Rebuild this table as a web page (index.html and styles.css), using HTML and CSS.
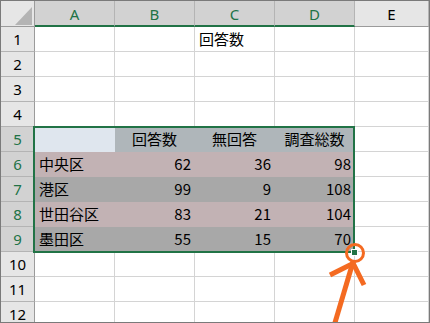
FILE: index.html
```html
<!DOCTYPE html>
<html>
	<head>
		<meta charset="UTF-8">
		<title>回答数</title>
		<link rel="stylesheet" href="styles.css">
	</head>
	<body>
		<div class="frame">
			<div class="sheet">
				<!-- 列見出し -->
				<div class="corner"><span class="tri"></span></div>
				<div class="colhead sel">A</div>
				<div class="colhead sel">B</div>
				<div class="colhead sel">C</div>
				<div class="colhead sel">D</div>
				<div class="colhead">E</div>
				<!-- 1 -->
				<div class="rowhead">1</div>
				<div class="cell"></div>
				<div class="cell"></div>
				<div class="cell">回答数</div>
				<div class="cell"></div>
				<div class="cell"></div>
				<!-- 2 -->
				<div class="rowhead">2</div>
				<div class="cell"></div>
				<div class="cell"></div>
				<div class="cell"></div>
				<div class="cell"></div>
				<div class="cell"></div>
				<!-- 3 -->
				<div class="rowhead">3</div>
				<div class="cell"></div>
				<div class="cell"></div>
				<div class="cell"></div>
				<div class="cell"></div>
				<div class="cell"></div>
				<!-- 4 -->
				<div class="rowhead">4</div>
				<div class="cell"></div>
				<div class="cell"></div>
				<div class="cell"></div>
				<div class="cell"></div>
				<div class="cell"></div>
				<!-- 5 表の見出し -->
				<div class="rowhead sel">5</div>
				<div class="cell c-blank"></div>
				<div class="cell c-head center">回答数</div>
				<div class="cell c-head center">無回答</div>
				<div class="cell c-head center">調査総数</div>
				<div class="cell"></div>
				<!-- 6 -->
				<div class="rowhead sel">6</div>
				<div class="cell c-pink">中央区</div>
				<div class="cell c-pink num">62</div>
				<div class="cell c-pink num">36</div>
				<div class="cell c-pink num">98</div>
				<div class="cell"></div>
				<!-- 7 -->
				<div class="rowhead sel">7</div>
				<div class="cell c-gray">港区</div>
				<div class="cell c-gray num">99</div>
				<div class="cell c-gray num">9</div>
				<div class="cell c-gray num">108</div>
				<div class="cell"></div>
				<!-- 8 -->
				<div class="rowhead sel">8</div>
				<div class="cell c-pink">世田谷区</div>
				<div class="cell c-pink num">83</div>
				<div class="cell c-pink num">21</div>
				<div class="cell c-pink num">104</div>
				<div class="cell"></div>
				<!-- 9 -->
				<div class="rowhead sel">9</div>
				<div class="cell c-gray">墨田区</div>
				<div class="cell c-gray num">55</div>
				<div class="cell c-gray num">15</div>
				<div class="cell c-gray num">70</div>
				<div class="cell"></div>
				<!-- 10 -->
				<div class="rowhead">10</div>
				<div class="cell"></div>
				<div class="cell"></div>
				<div class="cell"></div>
				<div class="cell"></div>
				<div class="cell"></div>
				<!-- 11 -->
				<div class="rowhead">11</div>
				<div class="cell"></div>
				<div class="cell"></div>
				<div class="cell"></div>
				<div class="cell"></div>
				<div class="cell"></div>
				<!-- 12 -->
				<div class="rowhead">12</div>
				<div class="cell"></div>
				<div class="cell"></div>
				<div class="cell"></div>
				<div class="cell"></div>
				<div class="cell"></div>
			</div>
			<!-- 選択範囲とフィルハンドル -->
			<div class="selection"></div>
			<div class="handle"></div>
			<!-- フィルハンドルを指す矢印 -->
			<svg class="pointer" width="430" height="323" viewBox="0 0 430 323">
				<circle cx="355" cy="253" r="8.5" fill="none" stroke="#f46a21" stroke-width="3"/>
				<g stroke="#f46a21" stroke-width="5" stroke-linecap="butt" fill="none">
					<line x1="353" y1="262" x2="334" y2="326"/>
					<line x1="354" y1="263" x2="330" y2="275"/>
					<line x1="353" y1="263" x2="364" y2="285"/>
				</g>
			</svg>
		</div>
	</body>
</html>
```

FILE: styles.css
```css
*{margin:0;padding:0;box-sizing:border-box;}
html,body{height:100%;background:#fff;}
body{font-family:"Noto Sans CJK JP","Noto Sans",sans-serif;}

.frame{
	position:relative;
	width:430px;
	height:323px;
	border:1px solid #7a7a7a;
	overflow:hidden;
}
.sheet{
	display:grid;
	grid-template-columns:34px 80px 80px 80px 80px 74px;
	grid-template-rows:26px repeat(12,25px);
}

/* 見出し */
.corner{
	position:relative;
	background:#e6e6e6;
	border-right:1px solid #9b9b9b;
	border-bottom:1px solid #9b9b9b;
}
.corner .tri{
	position:absolute;
	right:2px;
	bottom:1px;
	width:0;
	height:0;
	border-left:17px solid transparent;
	border-bottom:18px solid #b4b4b4;
}
.colhead{
	display:flex;
	align-items:center;
	justify-content:center;
	background:#e6e6e6;
	border-right:1px solid #b4b4b4;
	border-bottom:1px solid #9b9b9b;
	font-family:"Noto Sans",sans-serif;
	font-size:15px;
	color:#000;
}
.colhead.sel{
	background:#d2d2d2;
	color:#217346;
	border-bottom:2px solid #217346;
	padding-top:1px;
}
.rowhead{
	display:flex;
	align-items:center;
	justify-content:center;
	background:#e6e6e6;
	border-right:1px solid #9b9b9b;
	border-bottom:1px solid #b4b4b4;
	font-family:"Noto Sans",sans-serif;
	font-size:15px;
	color:#000;
}
.rowhead.sel{
	background:#d2d2d2;
	color:#217346;
}

/* セル */
.cell{
	display:flex;
	align-items:center;
	padding:0 4px;
	border-right:1px solid #d4d4d4;
	border-bottom:1px solid #d4d4d4;
	font-size:15px;
	line-height:24px;
	color:#000;
	white-space:nowrap;
}
.cell.center{justify-content:center;}
.cell.num{justify-content:flex-end;padding-right:3px;}
.c-blank{background:#dfe6ee;border-color:#dfe6ee;}
.c-head{background:#afb6ba;border-color:#afb6ba;}
.c-pink{background:#c2b2b4;border-color:#c2b2b4;}
.c-gray{background:#a8a8a8;border-color:#a8a8a8;}

/* 選択枠 */
.selection{
	position:absolute;
	left:32px;
	top:125px;
	width:322px;
	height:127px;
	border:2px solid #217346;
}
.handle{
	position:absolute;
	left:350px;
	top:248px;
	width:7px;
	height:7px;
	background:#217346;
	border:1px solid #fff;
}
.pointer{
	position:absolute;
	left:-1px;
	top:-1px;
	pointer-events:none;
}
```
